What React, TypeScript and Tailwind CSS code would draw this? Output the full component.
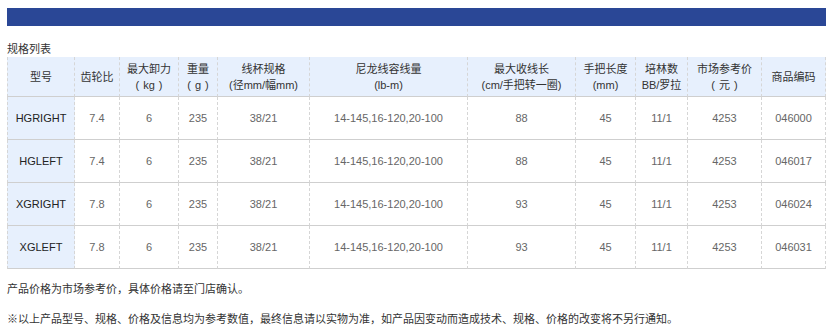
import React from 'react'

const cols = [68, 45, 59, 39, 92, 158, 108, 60, 52, 74, 64]

const headers: string[][] = [
  ['型号'],
  ['齿轮比'],
  ['最大卸力', '（kg）'],
  ['重量', '（g）'],
  ['线杯规格', '(径mm/幅mm)'],
  ['尼龙线容线量', '(lb-m)'],
  ['最大收线长', '(cm/手把转一圈)'],
  ['手把长度', '(mm)'],
  ['培林数', 'BB/罗拉'],
  ['市场参考价', '（元）'],
  ['商品编码'],
]

const rows: string[][] = [
  ['HGRIGHT', '7.4', '6', '235', '38/21', '14-145,16-120,20-100', '88', '45', '11/1', '4253', '046000'],
  ['HGLEFT', '7.4', '6', '235', '38/21', '14-145,16-120,20-100', '88', '45', '11/1', '4253', '046017'],
  ['XGRIGHT', '7.8', '6', '235', '38/21', '14-145,16-120,20-100', '93', '45', '11/1', '4253', '046024'],
  ['XGLEFT', '7.8', '6', '235', '38/21', '14-145,16-120,20-100', '93', '45', '11/1', '4253', '046031'],
]

// fullwidth brackets get squeezed by the fallback font, so pad them by hand
const Line = ({ text }: { text: string }) => {
  const m = text.match(/^（(.*)）$/)
  if (!m) return <div>{text}</div>
  return (
    <div>
      <span className="mr-[4px]">(</span>
      {m[1]}
      <span className="ml-[4px]">)</span>
    </div>
  )
}

export default function App() {
  return (
    <div className="w-[835px] h-[331px] bg-white px-[7px] pt-[8px] text-[11px] font-['Liberation_Sans','Noto_Sans_CJK_SC',sans-serif]">
      <div className="w-[819px] h-[18px] bg-[#2a4796]" />
      <div className="mt-[15px] h-[16px] leading-[16px] text-[#333]">规格列表</div>
      <table className="w-[818px] table-fixed border-separate border-spacing-0">
        <colgroup>
          {cols.map((w, i) => (
            <col key={i} style={{ width: w }} />
          ))}
        </colgroup>
        <thead>
          <tr className="h-[40px] bg-[#e7f0fd]">
            {headers.map((h, i) => (
              <th
                key={i}
                className={
                  'p-0 text-center align-middle font-normal leading-[16px] text-[#333] [border-right:1px_dashed_#d6d6d6] [border-bottom:1px_solid_#cfcfcf] ' +
                  (i === 0 ? '[border-left:1px_dashed_#d6d6d6]' : '')
                }
              >
                {h.map((line, j) => (
                  <Line key={j} text={line} />
                ))}
              </th>
            ))}
          </tr>
        </thead>
        <tbody>
          {rows.map((r, ri) => (
            <tr key={ri} className="h-[43px]">
              {r.map((c, ci) => (
                <td
                  key={ci}
                  className={
                    'p-0 text-center align-middle [border-right:1px_dashed_#d6d6d6] [border-bottom:1px_solid_#cfcfcf] ' +
                    (ci === 0
                      ? 'bg-[#e7f0fd] text-[#222] [border-left:1px_dashed_#d6d6d6]'
                      : 'text-[#666]')
                  }
                >
                  {c}
                </td>
              ))}
            </tr>
          ))}
        </tbody>
      </table>
      <div className="mt-[11px] leading-[18px] text-[#333]">产品价格为市场参考价，具体价格请至门店确认。</div>
      <div className="mt-[12px] leading-[18px] text-[#333]">
        ※以上产品型号、规格、价格及信息均为参考数值，最终信息请以实物为准，如产品因变动而造成技术、规格、价格的改变将不另行通知。
      </div>
    </div>
  )
}
